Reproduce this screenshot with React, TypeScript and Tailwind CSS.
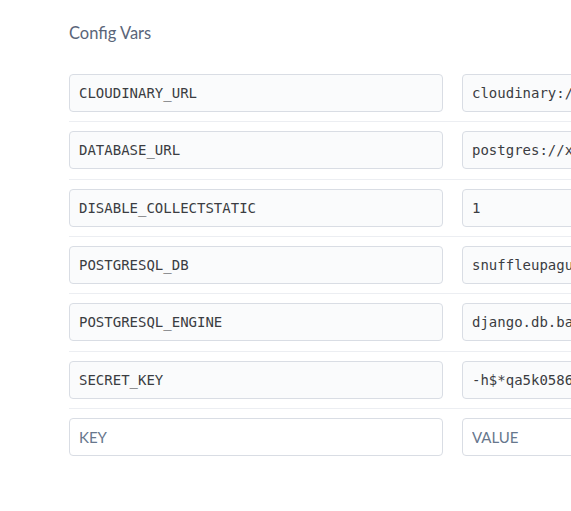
import React from 'react'

const vars = [
  { key: 'CLOUDINARY_URL', value: 'cloudinary://847362519283746:xKd93hfQ@dx7lmq' },
  { key: 'DATABASE_URL', value: 'postgres://xqvbnmzt:Hk29dlPq@ec2-54-228.compute-1' },
  { key: 'DISABLE_COLLECTSTATIC', value: '1' },
  { key: 'POSTGRESQL_DB', value: 'snuffleupagus' },
  { key: 'POSTGRESQL_ENGINE', value: 'django.db.backends.postgresql_psycopg2' },
  { key: 'SECRET_KEY', value: '-h$*qa5k0586@w!z3r9m^t2v7yp1c' },
]

const fieldCls =
  "flex h-[38px] w-[374px] shrink-0 items-center overflow-hidden whitespace-nowrap rounded-[4px] border border-[#d9dde4] pl-[9px] pr-2 text-[14px] leading-[20px]"

const Field = ({ text }: { text: string }) => (
  <div className={fieldCls + " bg-[#fafbfc] font-['DejaVu_Sans_Mono',monospace] text-[#3b3d42]"}>{text}</div>
)

const Empty = ({ label }: { label: string }) => (
  <input
    className={fieldCls + " bg-white font-['Lato',sans-serif] text-[15px] text-[#3b3d42] outline-none placeholder:text-[#67778d]"}
    placeholder={label}
  />
)

export default function App() {
  return (
    <div className="h-[511px] w-[571px] overflow-hidden bg-white">
      <div className="pl-[69px] pt-[23px]">
        <h2 className="font-['Lato',sans-serif] text-[16.5px] leading-[20px] text-[#5a6579]">Config Vars</h2>
        <div className="mt-[21.8px] w-[900px]">
          {vars.map((v) => (
            <div key={v.key} className="flex gap-[19px] border-b border-[#eceef2] py-[9.2px]">
              <Field text={v.key} />
              <Field text={v.value} />
            </div>
          ))}
          <div className="flex gap-[19px] py-[9.2px]">
            <Empty label="KEY" />
            <Empty label="VALUE" />
          </div>
        </div>
      </div>
    </div>
  )
}
